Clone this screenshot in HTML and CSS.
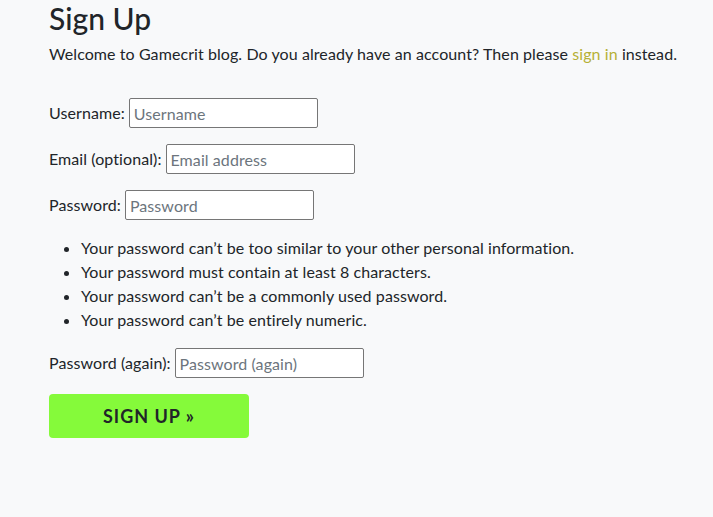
FILE: index.html
```html
<!DOCTYPE html>
<html lang="en">
<head>
<meta charset="utf-8">
<title>Sign Up</title>
<link rel="stylesheet" href="styles.css">
</head>
<body>
<main class="container">
  <h2 class="title">Sign Up</h2>
  <p class="intro">Welcome to Gamecrit blog. Do you already have an account? Then please <a class="link" href="#">sign in</a> instead.</p>
  <form class="signup-form">
    <p class="field"><label for="u">Username:</label> <input class="text-input" id="u" type="text" placeholder="Username"></p>
    <p class="field"><label for="e">Email (optional):</label> <input class="text-input" id="e" type="email" placeholder="Email address"></p>
    <p class="field"><label for="p1">Password:</label> <input class="text-input" id="p1" type="password" placeholder="Password"></p>
    <ul class="rules">
      <li>Your password can’t be too similar to your other personal information.</li>
      <li>Your password must contain at least 8 characters.</li>
      <li>Your password can’t be a commonly used password.</li>
      <li>Your password can’t be entirely numeric.</li>
    </ul>
    <p class="field"><label for="p2">Password (again):</label> <input class="text-input" id="p2" type="password" placeholder="Password (again)"></p>
    <button class="submit" type="submit">Sign Up &raquo;</button>
  </form>
</main>
</body>
</html>
```

FILE: styles.css
```css
html, body {
  margin: 0;
  padding: 0;
  background: #f8f9fa;
}
body {
  font-family: Lato, "Noto Sans", sans-serif;
  font-size: 16px;
  line-height: 24px;
  letter-spacing: 0.08px;
  color: #212529;
}
.container {
  padding: 0 49px;
}
.title {
  font-size: 30px;
  font-weight: 500;
  line-height: 36px;
  letter-spacing: 0;
  margin: 0 0 6px;
}
.intro {
  margin: 0 0 32px;
  white-space: nowrap;
}
.link {
  color: #b6b035;
  text-decoration: none;
}
.field {
  margin: 0 0 16px;
  height: 30px;
  display: flex;
  align-items: center;
  gap: 4px;
}
.text-input {
  box-sizing: border-box;
  width: 189px;
  height: 30px;
  border: 1px solid #767676;
  border-radius: 2px;
  padding: 0 4px;
  font-family: inherit;
  font-size: 16px;
  letter-spacing: 0.08px;
  color: #212529;
  background: #fff;
}
.text-input::placeholder {
  color: #6c757d;
}
.rules {
  margin: 0 0 16px;
  padding-left: 32px;
}
.submit {
  box-sizing: border-box;
  width: 200px;
  height: 44px;
  border: none;
  border-radius: 4px;
  background: #85fa3a;
  color: #212529;
  font-family: inherit;
  font-size: 18px;
  font-weight: 700;
  letter-spacing: 1px;
  text-transform: uppercase;
}
```
